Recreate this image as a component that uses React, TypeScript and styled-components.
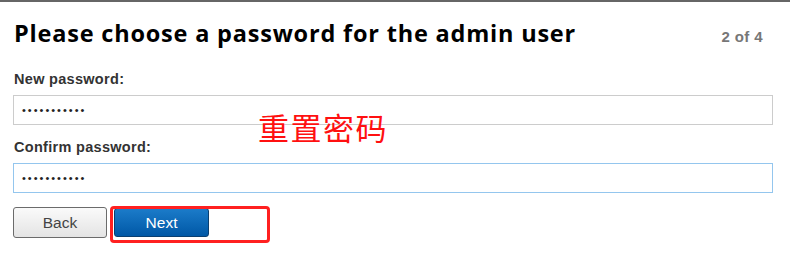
import React from "react";
import styled, { createGlobalStyle } from "styled-components";

const Global = createGlobalStyle`
  html, body { margin: 0; padding: 0; background: #fff; }
  body { font-family: "Liberation Sans", Arial, sans-serif; }
`;

const Page = styled.div`
  position: relative;
  width: 790px;
  height: 263px;
  box-sizing: border-box;
  border-top: 2px solid #666;
  padding: 0 17px 0 13px;
  overflow: hidden;
`;

const Header = styled.div`
  display: flex;
  align-items: baseline;
  justify-content: space-between;
  padding: 16px 10px 0 1px;
  height: 52px;
  box-sizing: content-box;
`;

const Title = styled.h1`
  margin: 0;
  font-family: "Open Sans", "Liberation Sans", sans-serif;
  font-size: 23.5px;
  line-height: 30px;
  font-weight: 700;
  letter-spacing: 0.8px;
  color: #000;
`;

const Step = styled.span`
  font-size: 15px;
  font-weight: 700;
  letter-spacing: 0.4px;
  color: #777;
`;

const Field = styled.div`
  display: flex;
  flex-direction: column;
`;

const Label = styled.label`
  font-size: 14.5px;
  font-weight: 700;
  color: #333;
  line-height: 18px;
  letter-spacing: 0.3px;
  padding-left: 1px;
  margin-bottom: 7px;
`;

const Input = styled.div<{ $focused?: boolean }>`
  height: 30px;
  box-sizing: border-box;
  border: 1px solid ${(p) => (p.$focused ? "#94c6ee" : "#cccccc")};
  background: #fff;
  display: flex;
  align-items: center;
  padding-left: 8px;
  font-size: 11px;
  letter-spacing: 2px;
  color: #222;
  margin-bottom: 13px;
`;

const Actions = styled.div`
  display: flex;
  gap: 7px;
  margin-top: 1px;
`;

const Button = styled.button<{ $primary?: boolean }>`
  width: ${(p) => (p.$primary ? "95px" : "94px")};
  height: ${(p) => (p.$primary ? "29px" : "31px")};
  margin-top: ${(p) => (p.$primary ? "1px" : "0")};
  box-sizing: border-box;
  border-radius: 3px;
  font-family: "Liberation Sans", Arial, sans-serif;
  font-size: 15.5px;
  padding: 0;
  cursor: pointer;
  border: 1px solid ${(p) => (p.$primary ? "#0a3f70" : "#6b6b6b")};
  color: ${(p) => (p.$primary ? "#fff" : "#444")};
  background: ${(p) =>
    p.$primary
      ? "linear-gradient(#1b7bc9, #0058a6)"
      : "linear-gradient(#fafafa, #e4e4e4)"};
`;

const Annotation = styled.div`
  position: absolute;
  left: 258px;
  top: 107px;
  font-family: "Noto Sans CJK SC", sans-serif;
  font-size: 31px;
  line-height: 36px;
  color: #ff1010;
  letter-spacing: 1.5px;
`;

const Highlight = styled.div`
  position: absolute;
  left: 110px;
  top: 204px;
  width: 160px;
  height: 37px;
  box-sizing: border-box;
  border: 3px solid #ff2020;
  border-radius: 4px;
  pointer-events: none;
`;

export default function App() {
  return (
    <>
      <Global />
      <Page>
        <Header>
          <Title>Please choose a password for the admin user</Title>
          <Step>2 of 4</Step>
        </Header>
        <Field>
          <Label>New password:</Label>
          <Input>•••••••••••</Input>
        </Field>
        <Field>
          <Label>Confirm password:</Label>
          <Input $focused>•••••••••••</Input>
        </Field>
        <Actions>
          <Button>Back</Button>
          <Button $primary>Next</Button>
        </Actions>
        <Annotation>重置密码</Annotation>
        <Highlight />
      </Page>
    </>
  );
}
